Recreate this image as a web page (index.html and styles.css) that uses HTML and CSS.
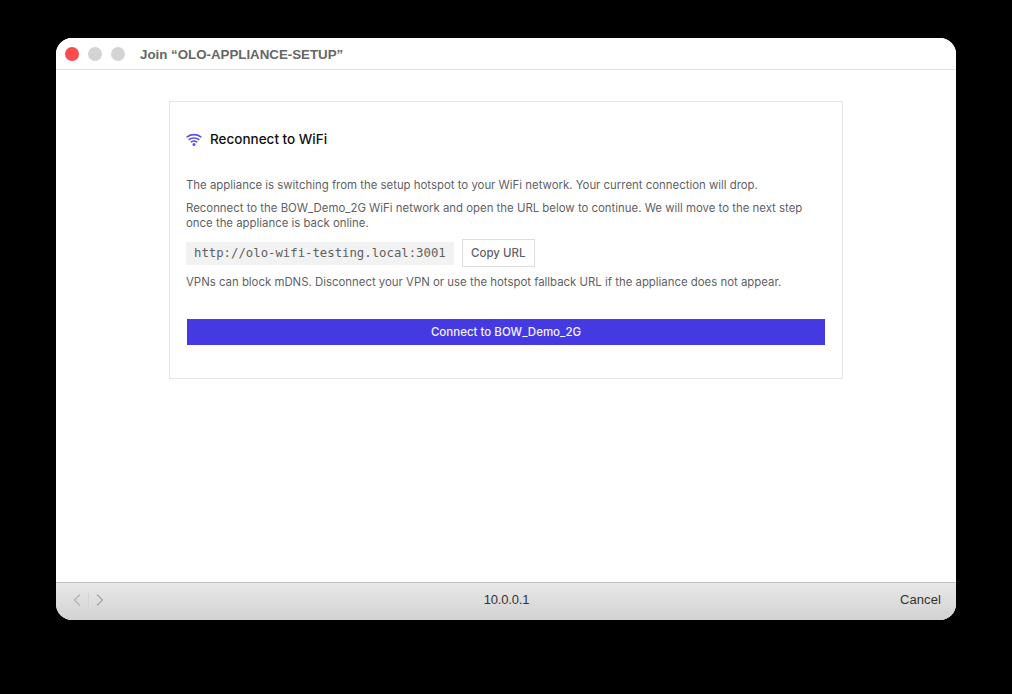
FILE: index.html
```html
<!DOCTYPE html>
<html lang="en">
<head>
  <meta charset="UTF-8" />
  <meta name="viewport" content="width=device-width, initial-scale=1.0" />
  <title>Join OLO-APPLIANCE-SETUP</title>
  <link rel="stylesheet" href="styles.css">
</head>
<body>
  <div class="window">
    <div class="titlebar">
      <span class="light red"></span>
      <span class="light"></span>
      <span class="light"></span>
      <span class="title">Join “OLO-APPLIANCE-SETUP”</span>
    </div>
    <div class="content">
      <div class="card">
        <div class="heading">
          <svg class="wifi" width="16" height="14" viewBox="0 0 16 14" fill="none" stroke="#5a52e6" stroke-width="1.6" stroke-linecap="round">
            <path d="M1.2 3.9C5 0.9 11 0.9 14.8 3.9" />
            <path d="M3.2 6.5C5.9 4.4 10.1 4.4 12.8 6.5" />
            <path d="M5.3 8.9C6.9 7.8 9.1 7.8 10.7 8.9" />
            <circle cx="8" cy="11.4" r="1.5" fill="#5a52e6" stroke="none" />
          </svg>
          <h1>Reconnect to WiFi</h1>
        </div>
        <p class="first">The appliance is switching from the setup hotspot to your WiFi network. Your current connection will drop.</p>
        <p class="second">Reconnect to the BOW_Demo_2G WiFi network and open the URL below to continue. We will move to the next step once the appliance is back online.</p>
        <div class="url-row">
          <code class="url">http://olo-wifi-testing.local:3001</code>
          <button class="copy">Copy URL</button>
        </div>
        <p>VPNs can block mDNS. Disconnect your VPN or use the hotspot fallback URL if the appliance does not appear.</p>
        <button class="connect">Connect to BOW_Demo_2G</button>
      </div>
    </div>
    <div class="footer">
      <div class="nav">
        <svg width="10" height="14" viewBox="0 0 10 14" fill="none" stroke="#b4b4b4" stroke-width="1.3"><path d="M8 1.5L2.5 7L8 12.5" /></svg>
        <span class="nav-sep"></span>
        <svg width="10" height="14" viewBox="0 0 10 14" fill="none" stroke="#a8a8a8" stroke-width="1.3"><path d="M2 1.5L7.5 7L2 12.5" /></svg>
      </div>
      <div class="address">10.0.0.1</div>
      <div class="cancel">Cancel</div>
    </div>
  </div>
</body>
</html>
```

FILE: styles.css
```css
html, body {
  height: 100%;
}
body {
  margin: 0;
  padding: 38px 56px 74px;
  box-sizing: border-box;
  background: #000;
  font-family: Inter, "Liberation Sans", sans-serif;
}
.window {
  height: 582px;
  display: flex;
  flex-direction: column;
  background: #fff;
  border-radius: 16px;
  overflow: hidden;
}
.titlebar {
  height: 31px;
  flex-shrink: 0;
  display: flex;
  align-items: center;
  padding-left: 9px;
  gap: 9px;
  border-bottom: 1px solid #e2e2e2;
  background: #fff;
}
.light {
  width: 14px;
  height: 14px;
  border-radius: 50%;
  background: #d4d4d4;
}
.light.red {
  background: #fc4a4d;
}
.title {
  margin-left: 6px;
  padding-top: 1px;
  font-family: "Liberation Sans", sans-serif;
  font-size: 13.3px;
  font-weight: bold;
  color: #666;
}
.content {
  flex: 1;
  padding-top: 31px;
  display: flex;
  justify-content: center;
  align-items: flex-start;
}
.card {
  width: 674px;
  height: 278px;
  box-sizing: border-box;
  border: 1px solid #e5e5e5;
  padding: 28px 16px 0;
}
.heading {
  display: flex;
  align-items: center;
  gap: 8px;
  margin-bottom: 30px;
}
.wifi {
  margin-top: 2px;
}
h1 {
  margin: 0;
  font-size: 13.5px;
  line-height: 18px;
  font-weight: 500;
  color: #111;
}
p {
  margin: 0;
  font-size: 11.4px;
  line-height: 15px;
  color: #5f5f67;
}
.first {
  margin-bottom: 8px;
}
.second {
  margin-bottom: 8px;
}
.url-row {
  display: flex;
  align-items: center;
  gap: 8px;
  margin-bottom: 8px;
}
.url {
  background: #f2f2f2;
  padding: 0 8px;
  height: 23px;
  line-height: 23px;
  font-family: "DejaVu Sans Mono", monospace;
  font-size: 12.3px;
  color: #5f5f5f;
}
.copy {
  height: 28px;
  width: 73px;
  padding: 0;
  border: 1px solid #dedede;
  background: #fff;
  font: 500 11.5px Inter, sans-serif;
  color: #5f5f67;
}
.connect {
  display: block;
  width: 638px;
  height: 26px;
  margin: 29px 0 0 1px;
  border: 0;
  background: #4539e2;
  color: #f4f4ff;
  font: 500 11.5px Inter, sans-serif;
}
.footer {
  height: 38px;
  flex-shrink: 0;
  box-sizing: border-box;
  display: grid;
  grid-template-columns: 1fr auto 1fr;
  align-items: center;
  padding: 0 15px 4px 16px;
  border-top: 1px solid #bcbcbc;
  background: linear-gradient(#e8e8e8, #d2d2d2);
  font-family: "Liberation Sans", sans-serif;
  font-size: 13px;
  color: #333;
}
.nav {
  display: flex;
  align-items: center;
  gap: 6px;
}
.nav-sep {
  width: 1px;
  height: 14px;
  background: #d2d2d2;
}
.address {
  letter-spacing: -0.2px;
}
.cancel {
  text-align: right;
  letter-spacing: 0.1px;
}
```
